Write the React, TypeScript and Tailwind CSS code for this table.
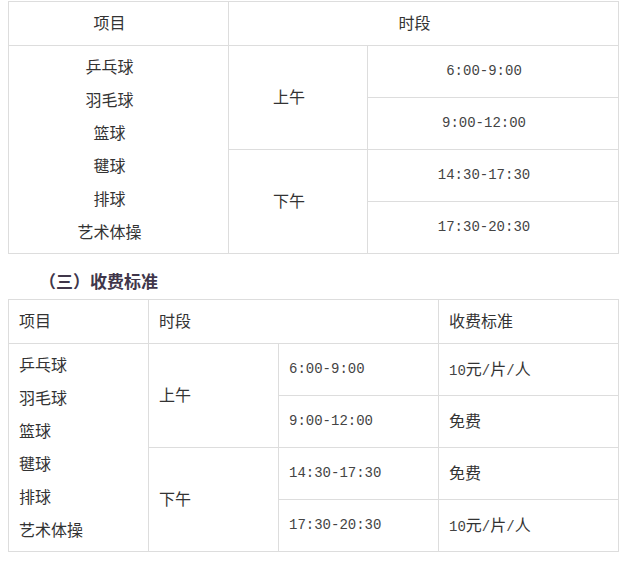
const ITEMS = ["乒乓球", "羽毛球", "篮球", "毽球", "排球", "艺术体操"];

const cell = "border border-[#dddddd] align-middle";
const mono = "font-['Liberation_Mono',monospace] text-[14px] text-[#444444]";

function Items({ center }: { center?: boolean }) {
  return (
    <div className={center ? "text-center" : ""}>
      {ITEMS.map((t) => (
        <div key={t} className="leading-[33px]">
          {t}
        </div>
      ))}
    </div>
  );
}

function Fee({ v }: { v: string }) {
  if (v === "免费") return <span>免费</span>;
  return (
    <span>
      <span className={mono}>10</span>元<span className={mono}>/</span>片
      <span className={mono}>/</span>人
    </span>
  );
}

export default function App() {
  const slots = [
    { half: "上午", times: ["6:00-9:00", "9:00-12:00"], fees: ["10元", "免费"] },
    { half: "下午", times: ["14:30-17:30", "17:30-20:30"], fees: ["免费", "10元"] },
  ];

  return (
    <div className="w-[628px] h-[575px] bg-white text-[#333333] text-[16px] font-['Liberation_Sans','Noto_Sans_CJK_SC',sans-serif] pt-[1px]">
      {/* 开放时间 */}
      <table className="ml-[8px] w-[611px] border-collapse table-fixed">
        <colgroup>
          <col className="w-[220px]" />
          <col className="w-[139px]" />
          <col />
        </colgroup>
        <tbody>
          <tr>
            <td className={`${cell} h-[44px] text-center pr-[18px]`}>项目</td>
            <td className={`${cell} text-center pr-[18px]`} colSpan={2}>
              时段
            </td>
          </tr>
          {slots.map((s, i) =>
            s.times.map((t, j) => (
              <tr key={t}>
                {i === 0 && j === 0 && (
                  <td className={`${cell} pr-[18px]`} rowSpan={4}>
                    <Items center />
                  </td>
                )}
                {j === 0 && (
                  <td className={`${cell} text-center pr-[18px]`} rowSpan={2}>
                    {s.half}
                  </td>
                )}
                <td className={`${cell} h-[52px] text-center pr-[18px] ${mono}`}>{t}</td>
              </tr>
            )),
          )}
        </tbody>
      </table>

      <div className="h-[45px] pt-[19px] pl-[39px] leading-[20px] text-[17px] font-bold text-[#40364a]">
        （三）收费标准
      </div>

      {/* 收费标准 */}
      <table className="ml-[8px] w-[611px] border-collapse table-fixed">
        <colgroup>
          <col className="w-[140px]" />
          <col className="w-[130px]" />
          <col className="w-[160px]" />
          <col />
        </colgroup>
        <tbody>
          <tr>
            <td className={`${cell} h-[44px] pl-[10px]`}>项目</td>
            <td className={`${cell} pl-[10px]`} colSpan={2}>
              时段
            </td>
            <td className={`${cell} pl-[10px]`}>收费标准</td>
          </tr>
          {slots.map((s, i) =>
            s.times.map((t, j) => (
              <tr key={t}>
                {i === 0 && j === 0 && (
                  <td className={`${cell} pl-[10px]`} rowSpan={4}>
                    <Items />
                  </td>
                )}
                {j === 0 && (
                  <td className={`${cell} pl-[10px]`} rowSpan={2}>
                    {s.half}
                  </td>
                )}
                <td className={`${cell} h-[52px] pl-[10px] ${mono}`}>{t}</td>
                <td className={`${cell} pl-[10px]`}>
                  <Fee v={s.fees[j]} />
                </td>
              </tr>
            )),
          )}
        </tbody>
      </table>
    </div>
  );
}
